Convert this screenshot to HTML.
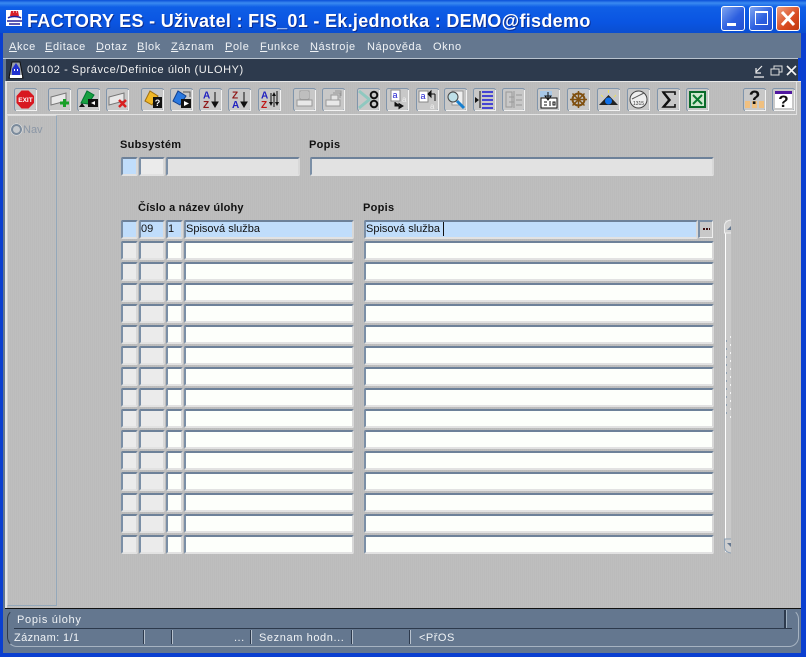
<!DOCTYPE html>
<html><head><meta charset="utf-8"><style>
html,body{margin:0;padding:0;width:806px;height:657px;overflow:hidden;background:#0a3fd0;font-family:"Liberation Sans",sans-serif}
div,span{position:absolute;box-sizing:border-box;white-space:nowrap}
#title{left:0;top:0;width:806px;height:33px;background:linear-gradient(180deg,#0a4fd8 0,#3a8af0 3px,#0f5fe6 7px,#0a55e2 22px,#0a4ed0 33px)}
#t{left:27px;top:9px;color:#fff;font-weight:bold;font-size:18px;line-height:24px;letter-spacing:.31px;text-shadow:1px 1px 0 #0a2c90}
.wb{top:6px;width:24px;height:25px;border:1px solid #fff;border-radius:3px;background:linear-gradient(135deg,#7fa5f0,#2c5fe0 55%,#2450d0)}
#menu{left:3px;top:33px;width:798px;height:25px;background:#64778f}
.m{top:40px;color:#f0f3f6;font-size:11px;line-height:14px;letter-spacing:.6px}
.m u{text-decoration:underline}
#ct{left:6px;top:59px;width:792px;height:22px;background:#2d3a4d}
#cl{left:3px;top:58px;width:795px;height:1px;background:#b9c3cf}
#ctt{left:27px;top:63px;color:#f2f2f2;font-size:11px;line-height:14px;letter-spacing:.57px}
#body{left:5px;top:81px;width:796px;height:527px;background:#bdbdbd;background-image:repeating-linear-gradient(90deg,#bebebe 0 1px,#bbb 1px 2px);border-top:1px solid #e8e8e8}
#tbline{left:5px;top:81px;width:2px;height:527px;background:#e5e5e5}
#left{left:3px;top:33px;width:4px;height:620px;background:#64778f}
#nav{left:7px;top:115px;width:50px;height:491px;border:1px solid #94a8ba;border-top:1px solid #dcdcdc;border-left:1px solid #cfcfcf}
#nv{left:23px;top:124px;color:#8b97a6;font-size:11px;line-height:12px}
#rb{left:11px;top:124px;width:11px;height:11px;border-radius:50%;border:2px solid #7b8b9c;background:#c5c9cd;box-shadow:0 0 0 .5px #eee}
.lab{font-size:11px;font-weight:bold;color:#111;line-height:14px;letter-spacing:.3px}
.f{height:19px;border:1px solid #f5f5f5;border-top:2px solid #6d8199;border-left:2px solid #7b8fa6;border-radius:2px;background:#fdfffb;border-right:2px solid #d8d8d8;border-bottom:2px solid #e2e2e2;font-size:11px;line-height:15px;padding-left:0;letter-spacing:0;color:#111}
.g{background:#ebebeb}
.gg{background:#e2e2e2}
.b{background:#c0ddfb}
.r{left:0;width:806px;height:19px}
.a{left:121px;width:17px}.c{left:139px;width:26px}.d{left:166px;width:17px}.e{left:184px;width:170px}.h{left:364px;width:350px}
#stat{left:3px;top:609px;width:798px;height:44px;background:#64778f}
#bk{left:5px;top:608px;width:796px;height:1px;background:#111}
#sb{left:7px;top:609px;width:792px;height:38px;border:1px solid #a6b3c1;border-top-color:transparent;border-radius:10px;border-left-color:#2d3a4d}
#sl{left:14px;top:628px;width:778px;height:1px;background:#2d3a4d}
.s{color:#f0f3f6;font-size:11px;line-height:14px;letter-spacing:.5px}
.sep{top:630px;width:2px;height:14px;background:#2d3a4d;border-right:1px solid #b8c2ce}
svg{position:absolute;left:0;top:0}
svg text{font-family:"Liberation Sans",sans-serif}
</style></head><body>
<div id="title"></div>
<svg width="24" height="24" style="left:4px;top:7px"><rect x="2" y="3" width="16" height="16" fill="#fff"/><path d="M6 9L7 4h7l1 5z" fill="#d8202a"/><path d="M9 5h1M12 5h1" stroke="#fff"/><path d="M4 11c3-2 10-2 13 0M3 14h15M5 17h11" stroke="#20209a" stroke-width="1.500" fill="none"/></svg>
<div id="t">FACTORY ES - Uživatel : FIS_01 - Ek.jednotka : DEMO@fisdemo</div>
<div class="wb" style="left:721px"></div><div style="left:727px;top:23px;width:9px;height:3px;background:#fff"></div>
<div class="wb" style="left:749px"></div><div style="left:755px;top:11px;width:13px;height:14px;border:1px solid #fff;border-top:2px solid #fff"></div>
<div class="wb" style="left:776px;background:linear-gradient(135deg,#f0a080,#d84a20 60%,#c03810)"></div>
<svg width="24" height="25" style="left:776px;top:6px"><path d="M6 6L18 19M18 6L6 19" stroke="#fff" stroke-width="3"/></svg>
<div id="menu"></div><div id="left"></div>
<div class="m" style="left:9px"><u>A</u>kce</div>
<div class="m" style="left:45px"><u>E</u>ditace</div>
<div class="m" style="left:96px"><u>D</u>otaz</div>
<div class="m" style="left:137px"><u>B</u>lok</div>
<div class="m" style="left:171px"><u>Z</u>áznam</div>
<div class="m" style="left:225px"><u>P</u>ole</div>
<div class="m" style="left:260px"><u>F</u>unkce</div>
<div class="m" style="left:310px"><u>N</u>ástroje</div>
<div class="m" style="left:367px">Nápo<u>v</u>ěda</div>
<div class="m" style="left:433px">Okno</div>
<div id="cl"></div><div id="ct"></div>
<svg width="20" height="20" style="left:7px;top:60px"><path d="M2 18L5 2h8l3 16z" fill="#9aa0aa" stroke="#111"/><path d="M9 3l4 6v6H5V9z" fill="#2030d0"/><path d="M7 9h1v2H7zM10 9h1v2h-1z" fill="#fff"/><rect x="3" y="15" width="12" height="3" fill="#fff"/></svg>
<div id="ctt">00102 - Správce/Definice úloh (ULOHY)</div>
<svg width="50" height="20" style="left:752px;top:62px"><path d="M2 15h10M10 4L4 10M4 6v5h5" stroke="#eee" fill="none" stroke-width="1.2"/><path d="M19 7h8v6h-8zM22 7V4h8v6h-3" stroke="#ddd" fill="none"/><path d="M35 4l9 9M44 4l-9 9" stroke="#f4f4f4" stroke-width="1.6"/></svg>
<div id="body"></div><div id="tbline"></div>
<div style="left:7px;top:82px;width:790px;height:33px;border-right:1px solid #e0e0e0;border-bottom:1px solid #e4e4e4"></div>
<svg width="806" height="40" style="left:0;top:80px"><defs><g id="bf"><rect x=".5" y=".5" width="22" height="22" rx="2" fill="#c8c8c8" stroke="#8095ac"/><path d="M2 22.500H22.500V2" stroke="#f2f2f2" fill="none"/></g></defs>
<g transform="translate(14,8)"><use href="#bf"/><path d="M7.500 2.500h7l5.500 5.500v7l-5.500 5.500h-7L2.500 15V8z" fill="#d81820"/><text x="11.500" y="14" text-anchor="middle" font-size="6.500" font-weight="bold" fill="#fff">EXIT</text></g>
<g transform="translate(48,8)"><use href="#bf"/><path d="M3 9l15-4v8L3 17z" fill="#e8e8e8" stroke="#777"/><path d="M12 15h9M16.500 11v8" stroke="#18a028" stroke-width="3"/></g>
<g transform="translate(77,8)"><use href="#bf"/><path d="M4 15L10 3l7 4-6 9z" fill="#18a040" stroke="#073"/><rect x="11" y="11" width="10" height="8" fill="#111"/><path d="M18 13v4l-4-2z" fill="#fff"/><path d="M2 19l3-4 3 4z" fill="#111"/></g>
<g transform="translate(106,8)"><use href="#bf"/><path d="M3 9l15-4v8L3 17z" fill="#e8e8e8" stroke="#777"/><path d="M13 12l7 7M20 12l-7 7" stroke="#d82020" stroke-width="2.500"/></g>
<g transform="translate(141,8)"><use href="#bf"/><path d="M4 13L9 3l8 5-6 9z" fill="#f0b828" stroke="#a07010"/><rect x="12" y="9" width="9" height="11" fill="#111"/><text x="16.500" y="18" text-anchor="middle" font-size="9" font-weight="bold" fill="#fff">?</text></g>
<g transform="translate(170,8)"><use href="#bf"/><path d="M3 13L8 3l8 5-6 9z" fill="#2878e0" stroke="#104090"/><rect x="11" y="11" width="10" height="9" fill="#111"/><path d="M14 13v5l5-2.500z" fill="#fff"/><path d="M13 4h7v5" stroke="#555" fill="none"/></g>
<g transform="translate(199,8)"><use href="#bf"/><text x="4" y="10.500" font-size="10" font-weight="bold" fill="#2020c0">A</text><text x="4" y="20" font-size="10" font-weight="bold" fill="#901818">Z</text><path d="M16 4v13M13 14l3 5 3-5z" stroke="#111" fill="#111"/></g>
<g transform="translate(228,8)"><use href="#bf"/><text x="4" y="10.500" font-size="10" font-weight="bold" fill="#901818">Z</text><text x="4" y="20" font-size="10" font-weight="bold" fill="#2020c0">A</text><path d="M16 4v13M13 14l3 5 3-5z" stroke="#111" fill="#111"/></g>
<g transform="translate(258,8)"><use href="#bf"/><text x="3" y="10.500" font-size="10" font-weight="bold" fill="#2020c0">A</text><text x="3" y="20" font-size="10" font-weight="bold" fill="#c01818">Z</text><path d="M13 5v11M16 8v11M19 3v14" stroke="#111"/><path d="M11 14l2 4 2-4zM17 14l2 4 2-4zM14 8l2-4 2 4z" fill="#111"/></g>
<g transform="translate(293,8)"><use href="#bf"/><path d="M7 3h9v8H7z" fill="#e4e4e4" stroke="#999"/><path d="M8 5h7M8 7h7M8 9h7" stroke="#999"/><rect x="4" y="12" width="15" height="6" fill="#e8e8e8" stroke="#999"/></g>
<g transform="translate(322,8)"><use href="#bf"/><path d="M9 7h7v5H9z" stroke="#999" fill="#e4e4e4"/><path d="M11 5h7v5M13 3h6v5" stroke="#999" fill="none"/><rect x="4" y="12" width="14" height="6" fill="#e8e8e8" stroke="#999"/></g>
<g transform="translate(357,8)"><use href="#bf"/><path d="M2 3l11 9M2 20l11-9" stroke="#8fc8c0" stroke-width="3"/><circle cx="17" cy="7" r="3.300" fill="none" stroke="#111" stroke-width="2"/><circle cx="17" cy="16" r="3.300" fill="none" stroke="#111" stroke-width="2"/></g>
<g transform="translate(386,8)"><use href="#bf"/><rect x="5" y="2" width="9" height="11" fill="#fff" stroke="#888"/><text x="6.500" y="10" font-size="9" fill="#2020d0">a</text><path d="M9 14v4h6M13 15.500l4 2.500-4 2.500z" stroke="#111" fill="#111"/><text x="16" y="14" font-size="8" fill="#eee">a</text></g>
<g transform="translate(416,8)"><use href="#bf"/><rect x="3" y="3" width="9" height="11" fill="#fff" stroke="#888"/><text x="4.500" y="11" font-size="9" fill="#2020d0">a</text><path d="M19 6h-5M15 3l-3 3 3 3z" stroke="#111" fill="#111"/><path d="M19 6v7" stroke="#111"/><text x="14" y="21" font-size="8" fill="#eee">a</text></g>
<g transform="translate(444,8)"><use href="#bf"/><path d="M8 3h11v14H8z" fill="#eee" stroke="#999"/><circle cx="9" cy="9" r="5" fill="#bfe0e8" stroke="#444"/><path d="M13 13l7 7" stroke="#1880d0" stroke-width="3"/></g>
<g transform="translate(473,8)"><use href="#bf"/><path d="M7 3v17" stroke="#111"/><path d="M9 4h11M9 8h11M9 12h11M9 16h11M9 20h11" stroke="#1818d8" stroke-width="1.500"/><path d="M2 9l4 3-4 3z" fill="#111"/></g>
<g transform="translate(502,8)"><use href="#bf"/><path d="M4 4h6v15H4zM12 3v17M14 7h6M14 12h6M14 17h6M7 9h5M7 14h5" stroke="#999" fill="none"/></g>
<g transform="translate(537,8)"><use href="#bf"/><path d="M3 3h12v6H3z" fill="#a8c8e8"/><rect x="4" y="10" width="16" height="10" fill="#fff" stroke="#111"/><path d="M11 4v7M8 8l3 4 3-4zM7 14h3M7 17h3M13 13v5M16 14h2v3h-2z" stroke="#111" fill="none"/></g>
<g transform="translate(567,8)"><use href="#bf"/><circle cx="11.500" cy="11.500" r="6" fill="none" stroke="#805010" stroke-width="2"/><path d="M11.500 3v17M3 11.500h17M5.500 5.500l12 12M17.500 5.500l-12 12" stroke="#805010" stroke-width="1.500"/></g>
<g transform="translate(597,8)"><use href="#bf"/><path d="M2 17L11.500 7 21 17z" fill="#222"/><circle cx="11.500" cy="13" r="3.500" fill="#1070e8"/><path d="M4 7l2 2M19 7l-2 2M11.500 2v3" stroke="#e8e060"/></g>
<g transform="translate(627,8)"><use href="#bf"/><circle cx="11.500" cy="11.500" r="8.500" fill="#eee" stroke="#444"/><path d="M5 11l12-6" stroke="#555"/><text x="11.500" y="17" text-anchor="middle" font-size="5" fill="#333">1315</text></g>
<g transform="translate(657,8)"><use href="#bf"/><path d="M5 4h13v3M18 4H6l6 8-6 7h12v-3" fill="none" stroke="#111" stroke-width="1.600"/><path d="M6.500 4.500l6 7.500-6 7" fill="none" stroke="#111" stroke-width="2.400"/></g>
<g transform="translate(686,8)"><use href="#bf"/><rect x="4" y="4" width="15" height="15" fill="#cfe8cf" stroke="#0a6a2a" stroke-width="2"/><path d="M7 7l9 9M16 7l-9 9" stroke="#0a7a30" stroke-width="2"/></g>
<g transform="translate(743,8)"><use href="#bf"/><rect x="2" y="13" width="5" height="7" fill="#f0c080"/><rect x="9" y="13" width="5" height="7" fill="#f0c080"/><rect x="16" y="13" width="5" height="7" fill="#f0c080"/><text x="11.500" y="16" text-anchor="middle" font-size="19" font-weight="bold" fill="#111">?</text></g>
<g transform="translate(772,8)"><use href="#bf"/><rect x="3" y="3" width="17" height="17" fill="#fff"/><rect x="3" y="3" width="17" height="3" fill="#5018a0"/><text x="11.500" y="19" text-anchor="middle" font-size="17" font-weight="bold" fill="#111">?</text></g>
</svg>
<div id="nav"></div><div id="rb"></div><div id="nv">Nav</div>
<div class="lab" style="left:120px;top:138px">Subsystém</div>
<div class="lab" style="left:309px;top:138px">Popis</div>
<div class="f b" style="left:121px;top:157px;width:17px"></div>
<div class="f g" style="left:139px;top:157px;width:26px"></div>
<div class="f gg" style="left:166px;top:157px;width:134px"></div>
<div class="f gg" style="left:310px;top:157px;width:404px"></div>
<div class="lab" style="left:138px;top:201px;letter-spacing:.19px">Číslo a název úlohy</div>
<div class="lab" style="left:363px;top:201px">Popis</div>
<div class="r" style="top:220px"><div class="f a b"></div><div class="f c b">09</div><div class="f d b">1</div><div class="f e b">Spisová služba</div><div class="f b" style="left:364px;width:334px">Spisová služba<span style="left:77px;top:0;width:1px;height:14px;background:#111"></span></div><div style="left:698px;top:0;width:15px;height:18px;border-top:2px solid #7b8fa6;border-left:2px solid #7b8fa6;border-right:1px solid #eee;border-bottom:1px solid #eee;background:#c8c8c8"><span style="left:3px;top:6px;width:7px;height:2px;background:repeating-linear-gradient(90deg,#401010 0 2px,transparent 2px 3px)"></span></div></div>
<div class="r" style="top:241px"><div class="f a g"></div><div class="f c g"></div><div class="f d"></div><div class="f e"></div><div class="f h"></div></div>
<div class="r" style="top:262px"><div class="f a g"></div><div class="f c g"></div><div class="f d"></div><div class="f e"></div><div class="f h"></div></div>
<div class="r" style="top:283px"><div class="f a g"></div><div class="f c g"></div><div class="f d"></div><div class="f e"></div><div class="f h"></div></div>
<div class="r" style="top:304px"><div class="f a g"></div><div class="f c g"></div><div class="f d"></div><div class="f e"></div><div class="f h"></div></div>
<div class="r" style="top:325px"><div class="f a g"></div><div class="f c g"></div><div class="f d"></div><div class="f e"></div><div class="f h"></div></div>
<div class="r" style="top:346px"><div class="f a g"></div><div class="f c g"></div><div class="f d"></div><div class="f e"></div><div class="f h"></div></div>
<div class="r" style="top:367px"><div class="f a g"></div><div class="f c g"></div><div class="f d"></div><div class="f e"></div><div class="f h"></div></div>
<div class="r" style="top:388px"><div class="f a g"></div><div class="f c g"></div><div class="f d"></div><div class="f e"></div><div class="f h"></div></div>
<div class="r" style="top:409px"><div class="f a g"></div><div class="f c g"></div><div class="f d"></div><div class="f e"></div><div class="f h"></div></div>
<div class="r" style="top:430px"><div class="f a g"></div><div class="f c g"></div><div class="f d"></div><div class="f e"></div><div class="f h"></div></div>
<div class="r" style="top:451px"><div class="f a g"></div><div class="f c g"></div><div class="f d"></div><div class="f e"></div><div class="f h"></div></div>
<div class="r" style="top:472px"><div class="f a g"></div><div class="f c g"></div><div class="f d"></div><div class="f e"></div><div class="f h"></div></div>
<div class="r" style="top:493px"><div class="f a g"></div><div class="f c g"></div><div class="f d"></div><div class="f e"></div><div class="f h"></div></div>
<div class="r" style="top:514px"><div class="f a g"></div><div class="f c g"></div><div class="f d"></div><div class="f e"></div><div class="f h"></div></div>
<div class="r" style="top:535px"><div class="f a g"></div><div class="f c g"></div><div class="f d"></div><div class="f e"></div><div class="f h"></div></div>
<svg width="8" height="340" style="left:723px;top:218px"><rect x="2" y="2" width="6" height="333" fill="#c9c9c9"/><path d="M2.500 14V334" stroke="#fff"/><path d="M8.500 2C5 2 1.500 4 1.500 8V15H9" fill="#cfcfcf" stroke="#eee"/><path d="M4 12l4-4v4z" fill="#64778f"/><path d="M9 321H1.500V329C1.500 333 5 335 9 335" fill="#cfcfcf" stroke="#8da0b4"/><path d="M4 325h4v4z" fill="#64778f"/><path d="M7.500 118v82" stroke="#f4f4f4" stroke-dasharray="2 6"/><path d="M3.500 122v76" stroke="#8f9faf" stroke-dasharray="2 6"/></svg>
<div id="bk"></div><div id="stat"></div><div id="sb"></div><div id="sl"></div>
<div style="left:784px;top:610px;width:3px;height:18px;background:#2d3a4d;border-right:1px solid #9fb0c0"></div>
<div class="s" style="left:17px;top:613px;letter-spacing:.7px">Popis úlohy</div>
<div class="s" style="left:14px;top:631px;letter-spacing:.4px">Záznam: 1/1</div>
<div class="sep" style="left:143px"></div><div class="sep" style="left:171px"></div>
<div class="s" style="left:234px;top:631px">...</div><div class="sep" style="left:250px"></div>
<div class="s" style="left:259px;top:631px;letter-spacing:.6px">Seznam hodn...</div><div class="sep" style="left:351px"></div><div class="sep" style="left:409px"></div>
<div class="s" style="left:419px;top:631px">&lt;PřOS</div>
</body></html>
